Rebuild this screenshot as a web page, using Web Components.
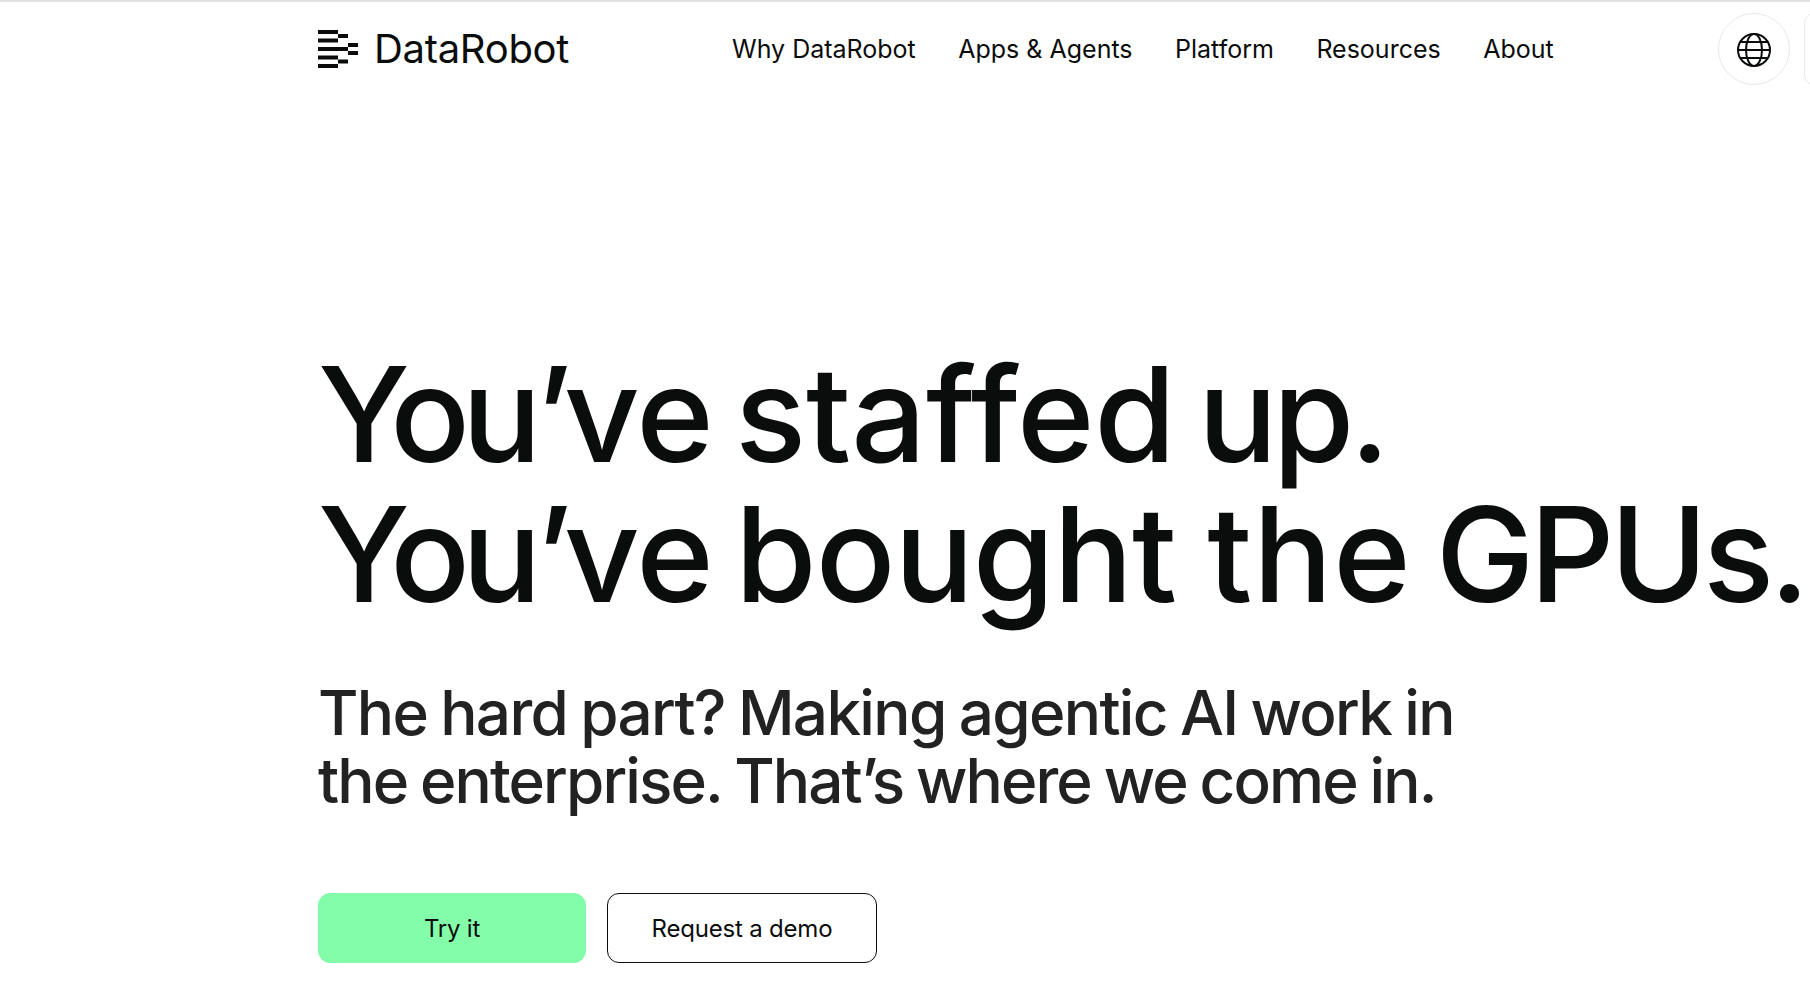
<!DOCTYPE html>
<html lang="en">
<head>
<meta charset="utf-8">
<title>DataRobot</title>
<style>
html, body { margin: 0; background: #fff; overflow: hidden; height: 1000px; }
body { font-family: "Inter", "Liberation Sans", sans-serif; color: #0b0c0c; }
.you, .wide, .tight, .the { display: inline-block; }
.you { letter-spacing: -8px; }
.wide { letter-spacing: -0.2px; }
.tight { letter-spacing: -4.6px; }
.the { letter-spacing: 0.8px; margin: 0 2px 0 9px; }
.l1 { display: block; letter-spacing: -1.67px; }
.l2 { display: block; letter-spacing: -1.89px; }
</style>
</head>
<body>
<site-page>
  <site-header></site-header>
  <hero-section>
    <span slot="title"><span class="you">You’</span>ve <span class="wide">staffed</span> <span class="tight">up.</span><br><span class="you">You’</span>ve bought <span class="the">the</span> <span class="tight">GPUs.</span></span>
    <span slot="lede"><span class="l1">The hard part? Making agentic AI work in</span><span class="l2">the enterprise. That’s where we come in.</span></span>
    <cta-button kind="primary">Try it</cta-button>
    <cta-button>Request a demo</cta-button>
  </hero-section>
</site-page>
<script>
class SitePage extends HTMLElement {
  constructor() {
    super();
    this.attachShadow({mode: 'open'}).innerHTML = `
      <style>
        :host { display: block; width: 1810px; height: 1000px; box-sizing: border-box; border-top: 2px solid #e2e2e2; overflow: hidden; }
      </style>
      <slot></slot>`;
  }
}

class SiteHeader extends HTMLElement {
  constructor() {
    super();
    this.attachShadow({mode: 'open'}).innerHTML = `
      <style>
        :host { display: flex; align-items: center; height: 94px; padding-left: 318px; width: 1900px; box-sizing: border-box; }
        .logo { display: flex; align-items: center; gap: 16px; font-size: 40px; letter-spacing: -0.3px; line-height: 1; width: 414px; color: #0b0c0c; }
        svg.mark { width: 40px; height: 38px; flex: none; }
        nav { display: flex; gap: 42.5px; font-size: 25px; width: 986px; }
        .globe { width: 72px; height: 72px; flex: none; box-sizing: border-box; border: 1px solid #e8e8e8; border-radius: 50%; display: flex; align-items: center; justify-content: center; }
        .globe svg { margin-top: 2px; }
        .next { width: 72px; height: 72px; margin-left: 14px; box-sizing: border-box; border: 1px solid #e8e8e8; border-radius: 10px; flex: none; }
      </style>
      <div class="logo">
        <svg class="mark" viewBox="0 0 40 38" fill="#0b0c0c">
          <rect x="0" y="0" width="20" height="4"/>
          <rect x="20" y="4" width="10" height="4"/>
          <rect x="0" y="8.500" width="20" height="4"/>
          <rect x="30" y="13" width="10" height="4"/>
          <rect x="0" y="17" width="30" height="4"/>
          <rect x="30" y="21" width="10" height="4"/>
          <rect x="0" y="25.500" width="20" height="4"/>
          <rect x="20" y="29.500" width="10" height="4"/>
          <rect x="0" y="34" width="20" height="4"/>
        </svg>
        <span>DataRobot</span>
      </div>
      <nav>
        <span>Why DataRobot</span><span>Apps &amp; Agents</span><span>Platform</span><span>Resources</span><span>About</span>
      </nav>
      <div class="globe">
        <svg width="36" height="36" viewBox="0 0 36 36" fill="none" stroke="#0b0c0c" stroke-width="2">
          <circle cx="18" cy="18" r="16"/>
          <ellipse cx="18" cy="18" rx="8" ry="16"/>
          <path d="M2 18h32M4.500 10h27M4.500 26h27"/>
        </svg>
      </div>
      <div class="next"></div>`;
  }
}

class HeroSection extends HTMLElement {
  constructor() {
    super();
    this.attachShadow({mode: 'open'}).innerHTML = `
      <style>
        :host { display: block; padding: 248px 0 0 318px; width: 1900px; box-sizing: border-box; }
        h1 { margin: 0; font-size: 132px; line-height: 140px; font-weight: 500; letter-spacing: -1px; word-spacing: -12px; color: #0b0c0c; white-space: nowrap; }
        p { margin: 55px 0 0; font-size: 62px; line-height: 68px; font-weight: 450; word-spacing: -1.8px; color: #222; white-space: nowrap; }
        .actions { display: flex; gap: 21px; margin-top: 78px; }
      </style>
      <h1><slot name="title"></slot></h1>
      <p><slot name="lede"></slot></p>
      <div class="actions"><slot></slot></div>`;
  }
}

class CtaButton extends HTMLElement {
  constructor() {
    super();
    this.attachShadow({mode: 'open'}).innerHTML = `
      <style>
        :host { display: flex; align-items: center; justify-content: center; width: 268px; height: 70px; box-sizing: border-box; border: 1px solid #0b0c0c; border-radius: 12px; font-size: 24px; letter-spacing: -0.2px; background: #fff; color: #0b0c0c; }
        :host([kind="primary"]) { background: #84fdaa; border-color: #84fdaa; }
        :host(:not([kind="primary"])) { width: 270px; }
      </style>
      <slot></slot>`;
  }
}

customElements.define('site-page', SitePage);
customElements.define('site-header', SiteHeader);
customElements.define('hero-section', HeroSection);
customElements.define('cta-button', CtaButton);
</script>
</body>
</html>
